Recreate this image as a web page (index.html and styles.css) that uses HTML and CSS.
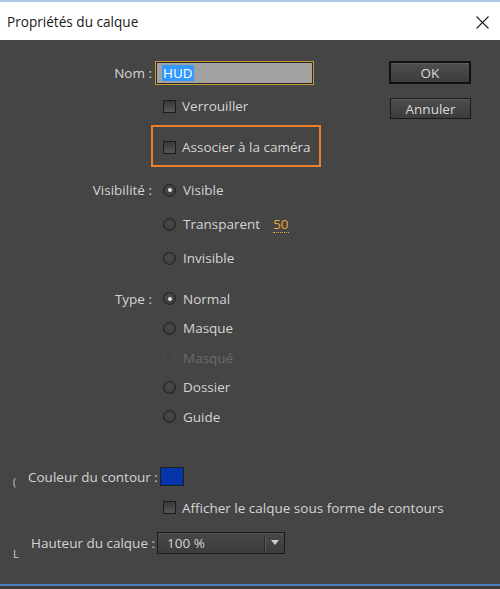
FILE: index.html
```html
<!DOCTYPE html>
<html lang="fr">
<head>
<meta charset="utf-8">
<title>Propriétés du calque</title>
<link rel="stylesheet" href="styles.css">
</head>
<body>
<div class="window">
  <header class="titlebar">
    <span class="title">Propriétés du calque</span>
    <svg class="close" viewBox="0 0 13 13" aria-hidden="true"><path d="M0.5 0.5L12.5 12.5M12.5 0.5L0.5 12.5"/></svg>
  </header>
  <main class="dialog">
    <div class="upper">
      <div class="form">
        <div class="row row-nom">
          <span class="lbl">Nom :</span>
          <div class="field"><span class="sel">HUD</span></div>
        </div>
        <div class="row row-lock">
          <span class="lbl"></span>
          <label class="check"><span class="box"></span>Verrouiller</label>
        </div>
        <div class="highlight">
          <label class="check"><span class="box"></span>Associer à la caméra</label>
        </div>
        <div class="group group-vis">
          <div class="row vrow">
            <span class="lbl">Visibilité :</span>
            <label class="radio"><span class="dot on"></span>Visible</label>
          </div>
          <div class="row vrow">
            <span class="lbl"></span>
            <label class="radio"><span class="dot"></span>Transparent</label>
            <span class="num">50</span>
          </div>
          <div class="row vrow">
            <span class="lbl"></span>
            <label class="radio"><span class="dot"></span>Invisible</label>
          </div>
        </div>
        <div class="group group-type">
          <div class="row trow">
            <span class="lbl">Type :</span>
            <label class="radio"><span class="dot on"></span>Normal</label>
          </div>
          <div class="row trow">
            <span class="lbl"></span>
            <label class="radio"><span class="dot"></span>Masque</label>
          </div>
          <div class="row trow">
            <span class="lbl"></span>
            <label class="radio disabled"><span class="dot"></span>Masqué</label>
          </div>
          <div class="row trow">
            <span class="lbl"></span>
            <label class="radio"><span class="dot"></span>Dossier</label>
          </div>
          <div class="row trow">
            <span class="lbl"></span>
            <label class="radio"><span class="dot"></span>Guide</label>
          </div>
        </div>
      </div>
      <div class="buttons">
        <button class="btn btn-default">OK</button>
        <button class="btn">Annuler</button>
      </div>
    </div>
    <div class="lower">
      <div class="lrow lrow-color">
        <span class="mark mark-paren">(</span>
        <span class="llbl llbl-color">Couleur du contour :</span>
        <span class="swatch"></span>
      </div>
      <div class="lrow lrow-outline">
        <label class="check"><span class="box"></span>Afficher le calque sous forme de contours</label>
      </div>
      <div class="lrow lrow-height">
        <span class="mark mark-l">L</span>
        <span class="llbl llbl-height">Hauteur du calque :</span>
        <div class="select">
          <span class="select-val">100 %</span>
          <span class="select-sep"></span>
          <svg class="select-arrow" viewBox="0 0 8 5" aria-hidden="true"><path d="M0 0H8L4 5Z"/></svg>
        </div>
      </div>
    </div>
  </main>
</div>
</body>
</html>
```

FILE: styles.css
```css
* { box-sizing: border-box; }
html, body { margin: 0; padding: 0; }
body {
  width: 500px;
  height: 589px;
  overflow: hidden;
  background: #3a3a3a;
  font-family: "Open Sans", "Noto Sans", sans-serif;
  font-size: 13.5px;
  color: #d4d4d4;
}
.window { display: flex; flex-direction: column; height: 589px; }

.titlebar {
  height: 40px;
  border-top: 2px solid #a9c9e8;
  background: #ffffff;
  display: flex;
  align-items: center;
  justify-content: space-between;
  padding: 0 11px 0 7px;
}
.title { font-size: 13.6px; color: #1a1a1a; }
.close { width: 13px; height: 13px; margin-top: 2px; }
.close path { stroke: #222; stroke-width: 1.1; fill: none; }

.dialog {
  height: 546px;
  background: #454545;
  border-bottom: 2px solid #4a80b8;
  padding-top: 21px;
}
.upper { display: flex; align-items: flex-start; }
.form { flex: 1; }

.row { display: flex; align-items: center; }
.lbl { width: 153px; flex: none; text-align: right; padding-right: 1px; margin-right: 2px; white-space: nowrap; }
.row-nom { height: 24px; }
.row-lock { height: 20px; margin-top: 11px; }

.field {
  width: 159px;
  height: 24px;
  border: 1px solid #c49a35;
  background: #a2a2a2;
  box-shadow: inset 0 0 0 1px #2a2a2a;
  padding: 0 0 0 6px;
  display: flex;
  align-items: center;
}
.sel { background: #3399ff; color: #fff; line-height: 16px; padding: 0 1px; }

.check { display: flex; align-items: center; margin-left: 8px; height: 20px; white-space: nowrap; }
.box {
  width: 13px;
  height: 13px;
  border: 1px solid #1c1c1c;
  background: linear-gradient(#383838, #575757);
  margin-right: 6px;
  flex: none;
}

.highlight {
  margin: 9px 0 0 151px;
  width: 170px;
  height: 42px;
  border: 2px solid #ec7f2b;
  padding: 10px 0 0 2px;
}

.group-vis { margin-top: 6px; }
.vrow { height: 34px; }
.group-type { margin-top: 9px; }
.trow { height: 29.5px; }

.radio { display: flex; align-items: center; margin-left: 8px; }
.dot {
  width: 13px;
  height: 13px;
  border-radius: 50%;
  border: 1px solid #1e1e1e;
  background: radial-gradient(circle at 50% 40%, #4a4a4a, #3a3a3a);
  margin-right: 7px;
  flex: none;
  display: flex;
  align-items: center;
  justify-content: center;
}
.dot.on::after {
  content: "";
  width: 4px;
  height: 4px;
  border-radius: 50%;
  background: #e4e4e4;
}
.disabled { color: #6b6b6b; }
.disabled .dot { border-color: #4e4e4e; background: #444; }

.num {
  color: #e8a63c;
  margin-left: 13px;
  border-bottom: 1px dotted #e8a63c;
  line-height: 15px;
  margin-top: 2px;
}

.buttons {
  width: 82px;
  margin-right: 29px;
  display: flex;
  flex-direction: column;
  align-items: flex-end;
}
.btn {
  font-family: inherit;
  font-size: 13.5px;
  color: #d8d8d8;
  padding: 0;
  width: 81px;
  height: 21px;
  border: 1px solid #1a1a1a;
  background: linear-gradient(#4e4e4e, #3c3c3c);
  box-shadow: inset 0 1px 0 #5c5c5c;
}
.btn-default {
  width: 82px;
  height: 23px;
  border: 2px solid #101010;
  margin-bottom: 14px;
}

.lower { margin-top: 35px; }
.lrow { display: flex; align-items: center; }
.lrow-color { height: 20px; padding-left: 13px; }
.lrow-outline { height: 20px; margin-top: 11px; padding-left: 155px; }
.lrow-height { height: 22px; margin-top: 14px; padding-left: 13px; }

.llbl { flex: none; white-space: nowrap; }
.llbl-color { width: 132px; }
.llbl-height { width: 126px; }

.mark { font-size: 10px; color: #d4d4d4; width: 15px; flex: none; align-self: flex-end; }
.mark-paren { line-height: 12px; margin-bottom: -1px; }
.mark-l { width: 18px; font-size: 11px; line-height: 14px; margin-bottom: -7px; }

.swatch {
  width: 24px;
  height: 19px;
  background: #0435aa;
  border: 1px solid #1f1f1f;
}

.select {
  width: 128px;
  height: 22px;
  border: 1px solid #1a1a1a;
  background: linear-gradient(#484848, #3c3c3c);
  box-shadow: inset 0 1px 0 #555;
  display: flex;
  align-items: center;
  padding-left: 9px;
}
.select-val { width: 97px; color: #d2d2d2; }
.select-sep { width: 1px; height: 16px; background: #2a2a2a; box-shadow: 1px 0 0 #5a5a5a; }
.select-arrow { width: 8px; height: 5px; margin-left: 6px; }
.select-arrow path { fill: #d0d0d0; }
```
